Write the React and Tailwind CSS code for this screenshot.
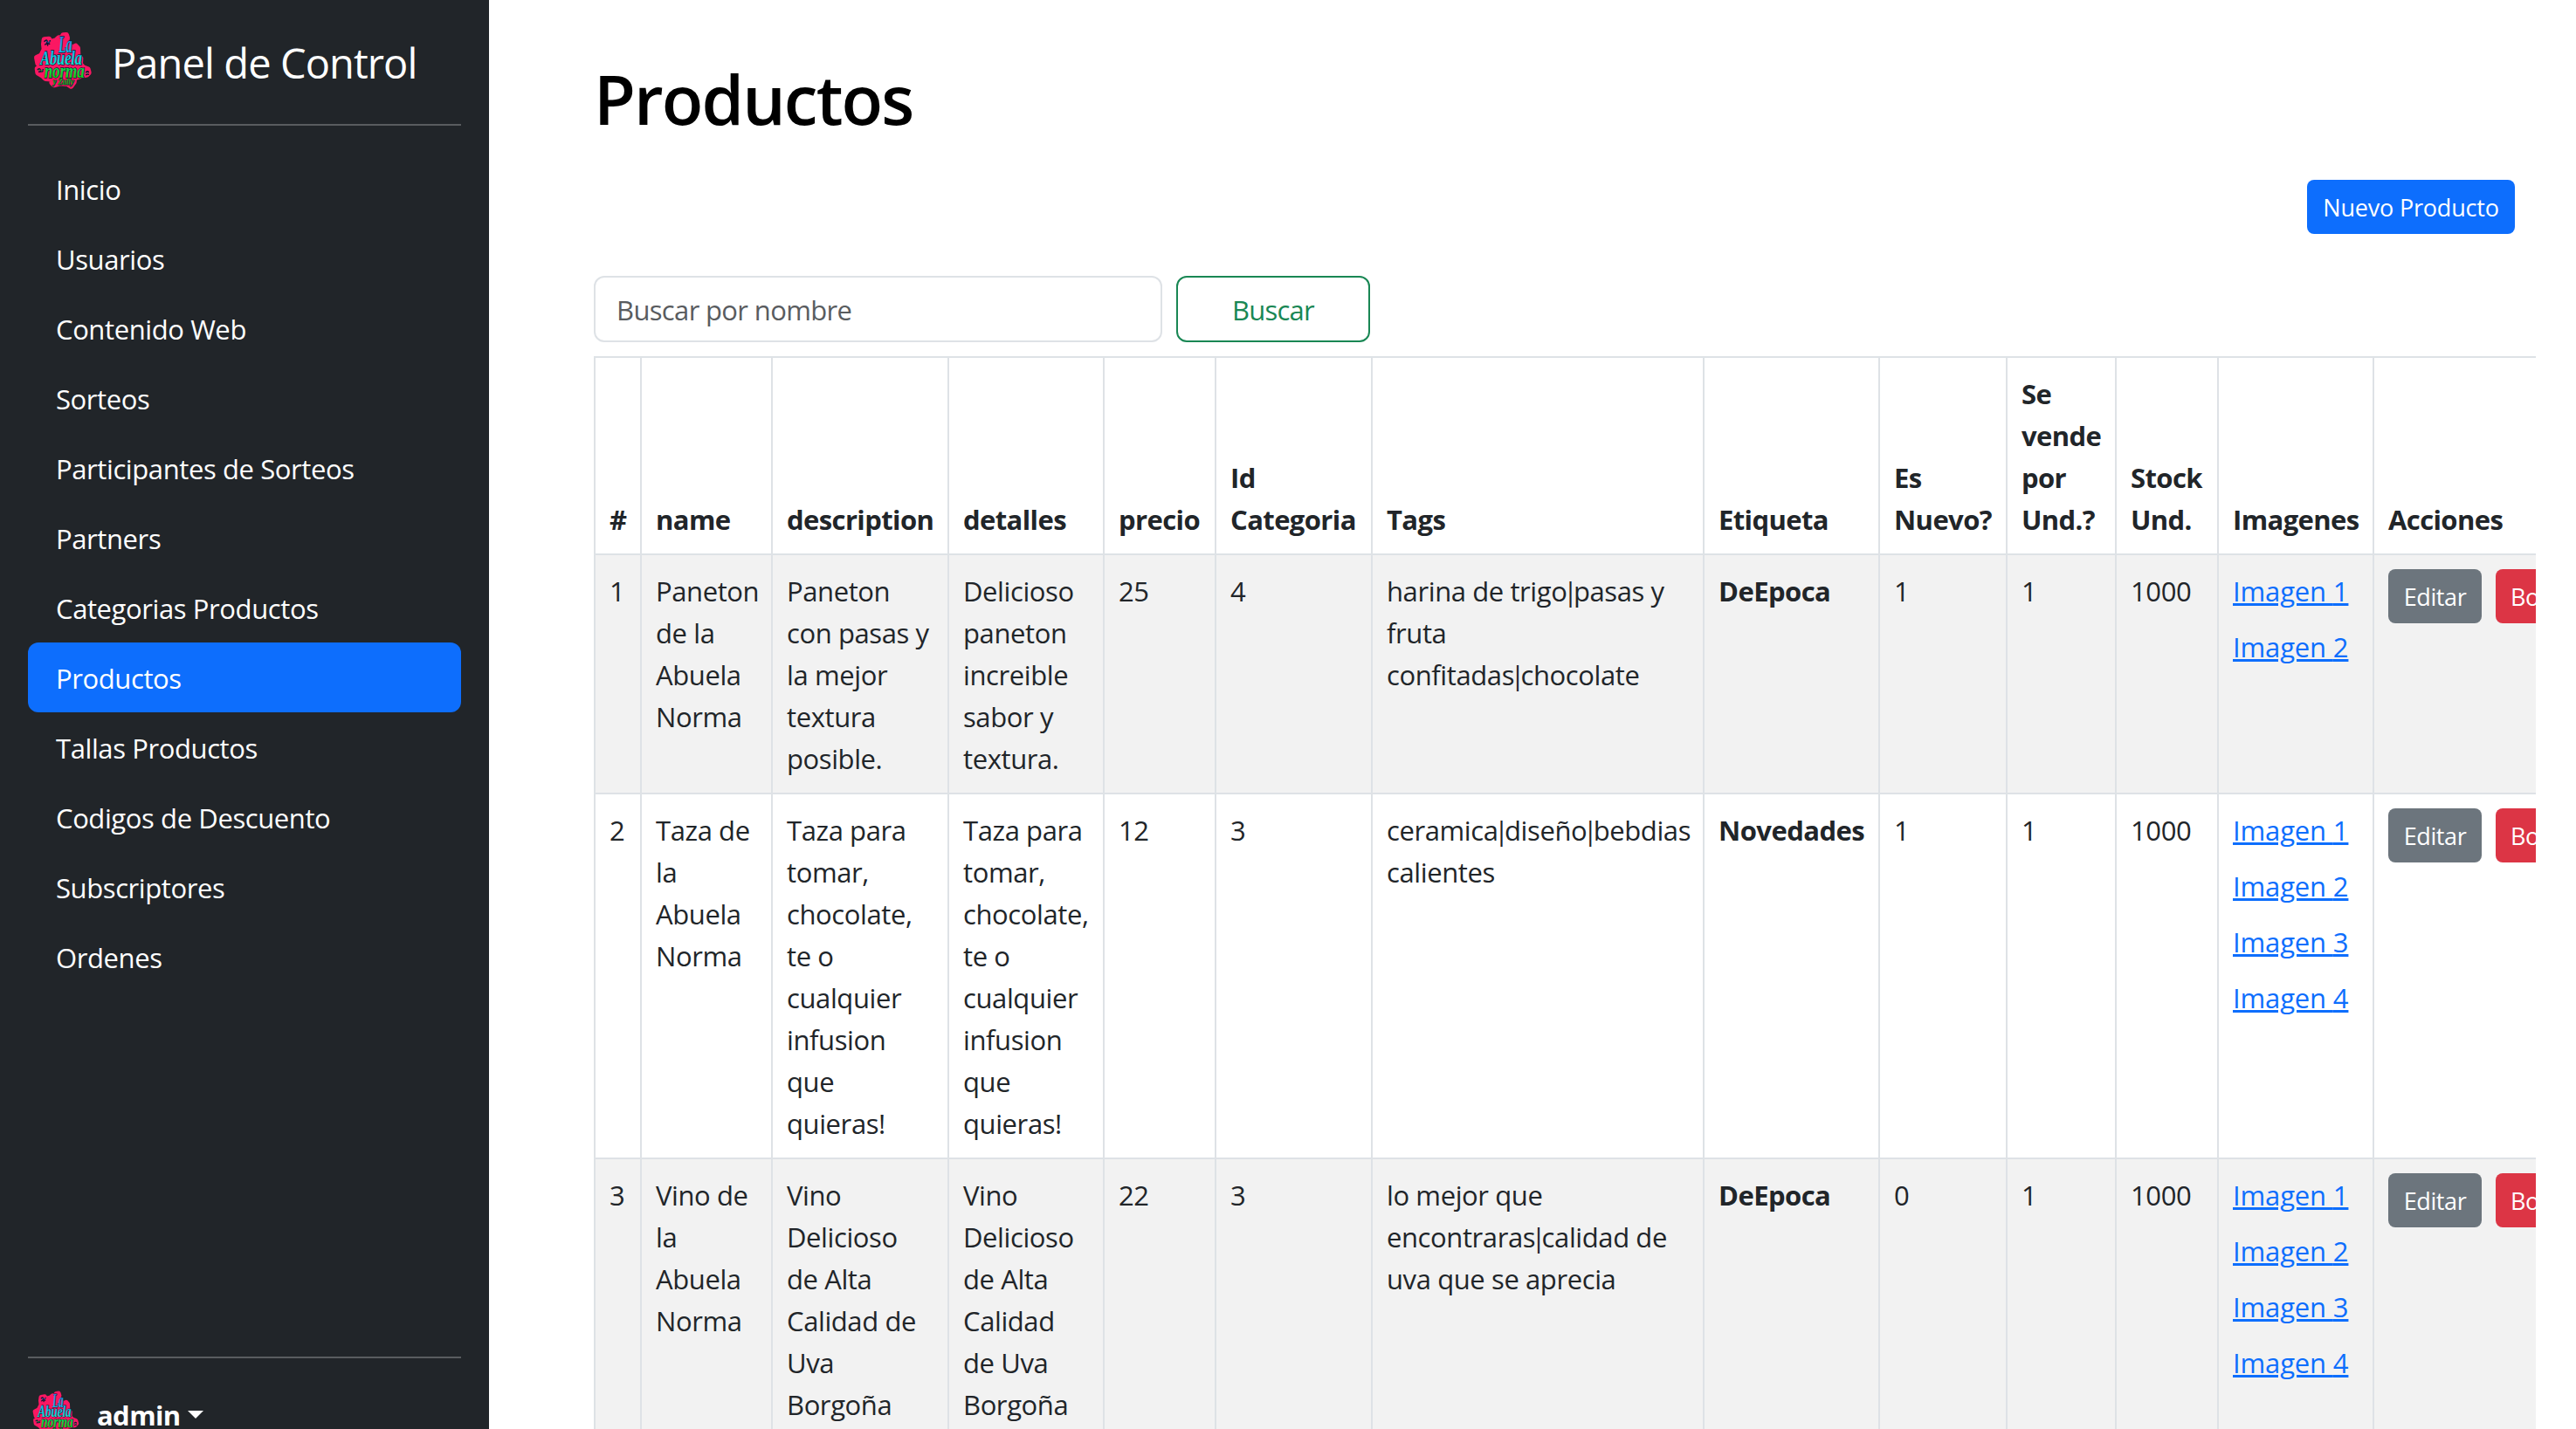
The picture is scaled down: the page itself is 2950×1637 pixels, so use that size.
const NAV = [
  'Inicio',
  'Usuarios',
  'Contenido Web',
  'Sorteos',
  'Participantes de Sorteos',
  'Partners',
  'Categorias Productos',
  'Productos',
  'Tallas Productos',
  'Codigos de Descuento',
  'Subscriptores',
  'Ordenes',
];

const COLUMNS = [
  { lines: ['#'], width: 'w-[53px]' },
  { lines: ['name'], width: 'w-[150px]' },
  { lines: ['description'], width: 'w-[202px]' },
  { lines: ['detalles'], width: 'w-[178px]' },
  { lines: ['precio'], width: 'w-[128px]' },
  { lines: ['Id', 'Categoria'], width: 'w-[179px]' },
  { lines: ['Tags'], width: 'w-[380px]' },
  { lines: ['Etiqueta'], width: 'w-[201px]' },
  { lines: ['Es', 'Nuevo?'], width: 'w-[146px]' },
  { lines: ['Se', 'vende', 'por', 'Und.?'], width: 'w-[125px]' },
  { lines: ['Stock', 'Und.'], width: 'w-[117px]' },
  { lines: ['Imagenes'], width: 'w-[178px]' },
  { lines: ['Acciones'], width: 'w-[262px]' },
];

const ROWS = [
  {
    id: '1',
    name: ['Paneton', 'de la', 'Abuela', 'Norma'],
    description: ['Paneton', 'con pasas y', 'la mejor', 'textura', 'posible.'],
    details: ['Delicioso', 'paneton', 'increible', 'sabor y', 'textura.'],
    price: '25',
    category: '4',
    tags: ['harina de trigo|pasas y', 'fruta', 'confitadas|chocolate'],
    label: 'DeEpoca',
    isNew: '1',
    images: 2,
  },
  {
    id: '2',
    name: ['Taza de', 'la', 'Abuela', 'Norma'],
    description: ['Taza para', 'tomar,', 'chocolate,', 'te o', 'cualquier', 'infusion', 'que', 'quieras!'],
    details: ['Taza para', 'tomar,', 'chocolate,', 'te o', 'cualquier', 'infusion', 'que', 'quieras!'],
    price: '12',
    category: '3',
    tags: ['ceramica|diseño|bebdias', 'calientes'],
    label: 'Novedades',
    isNew: '1',
    images: 4,
  },
  {
    id: '3',
    name: ['Vino de', 'la', 'Abuela', 'Norma'],
    description: ['Vino', 'Delicioso', 'de Alta', 'Calidad de', 'Uva', 'Borgoña'],
    details: ['Vino', 'Delicioso', 'de Alta', 'Calidad', 'de Uva', 'Borgoña'],
    price: '22',
    category: '3',
    tags: ['lo mejor que', 'encontraras|calidad de', 'uva que se aprecia'],
    label: 'DeEpoca',
    isNew: '0',
    images: 4,
  },
];

function Logo({ className, id }) {
  const lettering = {
    fontFamily: '"Liberation Serif", serif',
    fontStyle: 'italic',
    fontWeight: 700,
    stroke: '#0b1633',
    strokeWidth: 4,
    paintOrder: 'stroke',
  };
  return (
    <svg viewBox="0 0 240 240" className={className} aria-hidden="true">
      <defs>
        <linearGradient id={id} gradientUnits="userSpaceOnUse" x1="0" y1="30" x2="0" y2="134">
          <stop offset="0" stopColor="#2a80e0" />
          <stop offset="0.55" stopColor="#12b4e4" />
          <stop offset="1" stopColor="#14e6cf" />
        </linearGradient>
        <linearGradient id={id + '-g'} gradientUnits="userSpaceOnUse" x1="0" y1="135" x2="0" y2="212">
          <stop offset="0" stopColor="#14d860" />
          <stop offset="0.5" stopColor="#12d41c" />
          <stop offset="1" stopColor="#0a9a1c" />
        </linearGradient>
      </defs>
      <polygon
        fill="#fb1762"
        stroke="#fb1762"
        strokeWidth="18"
        strokeLinejoin="round"
        points="97,48 106,40 117,40 121,31 132,30 135,40 132,58 146,68 150,76 164,68 171,76 172,100 181,110 180,130 190,142 206,148 209,160 202,167 178,172 160,178 158,192 148,206 136,198 110,196 90,202 82,194 88,182 60,180 50,170 34,160 32,146 46,138 34,128 30,108 46,100 56,80 54,62 56,46 72,44 78,54"
      />
      <g stroke="#0b1633" strokeWidth="4.5" fill="none" strokeLinecap="round">
        <path d="M57 52q8-9 10 2t9-4M59 63q8-7 15-2M64 48l4 18" />
        <path d="M34 149q8-6 9 3t9-3M38 157l13-2" />
        <path d="M200 158q6-5 8 0M200 167q6-4 8-1" />
      </g>
      <g strokeWidth="2" fill="none" strokeLinecap="round">
        <path stroke="#2a80e0" d="M60 55q6-6 8 0t7-3" />
        <path stroke="#14c840" d="M37 151q5-4 7 2t6-2M201 162q4-3 6 0" />
      </g>
      <g {...lettering} fill={`url(#${id})`}>
        <text x="105" y="91" fontSize="84" textLength="47" lengthAdjust="spacingAndGlyphs">La</text>
        <text x="42" y="132" fontSize="70" textLength="144" lengthAdjust="spacingAndGlyphs">Abuela</text>
      </g>
      <g {...lettering} fill={`url(#${id}-g)`}>
        <text x="56" y="177" fontSize="70" textLength="138" lengthAdjust="spacingAndGlyphs">norma</text>
        <text x="86" y="202" fontSize="34" strokeWidth="3" textLength="72" lengthAdjust="spacingAndGlyphs">y Zully</text>
      </g>
    </svg>
  );
}

/* The vertical bar of the interface font is narrow, so it is pulled in on both sides. */
function Line({ text }) {
  const parts = text.split('|');
  return (
    <div className="whitespace-nowrap">
      {parts.map((part, i) => (
        <span key={i}>
          {i > 0 && <span className="-mx-[4.6px]">|</span>}
          {part}
        </span>
      ))}
    </div>
  );
}

function Cell({ lines, striped, bold }) {
  return (
    <td
      className={
        'border-r-2 border-b-2 border-[#dee2e6] px-4 pt-[17px] pb-[15px] align-top ' +
        (striped ? 'bg-[#f2f2f2] ' : 'bg-white ') +
        (bold ? 'font-bold tracking-[-0.55px]' : '')
      }
    >
      {lines.map((line, i) => (
        <Line key={i} text={line} />
      ))}
    </td>
  );
}

function Sidebar() {
  return (
    <aside className="flex h-[1684px] w-[560px] shrink-0 flex-col bg-[#212529] px-8 pt-[30px] text-white">
      <a className="flex h-20 items-center">
        <Logo className="size-20 shrink-0" id="brand" />
        <span className="pt-[3px] pl-4 text-[47px] leading-[72px] tracking-[-0.9px] whitespace-nowrap">
          Panel de Control
        </span>
      </a>
      <hr className="mt-8 border-t-2 border-[#595c5f]" />
      <nav className="mt-8 flex flex-col">
        {NAV.map((item) => (
          <a
            key={item}
            className={
              'h-20 rounded-xl px-8 pt-[17px] pb-[15px] ' + (item === 'Productos' ? 'bg-[#0d6efd]' : '')
            }
          >
            {item}
          </a>
        ))}
      </nav>
      <hr className="mt-auto border-t-2 border-[#595c5f]" />
      <div className="mt-8 flex h-24 items-start">
        <Logo className="size-16 shrink-0" id="account" />
        <strong className="ml-[15px] pt-[9px] tracking-[-0.6px]">admin</strong>
        <span className="mt-7 ml-2 border-x-[9.6px] border-t-[9.6px] border-x-transparent border-t-white" />
      </div>
    </aside>
  );
}

function ProductTable() {
  return (
    <div className="mt-4 w-[2224px] overflow-hidden">
      <table className="w-[2301px] table-fixed border-separate border-spacing-0 border-t-2 border-l-2 border-[#dee2e6] text-[#212529]">
        <colgroup>
          {COLUMNS.map((column, i) => (
            <col key={i} className={column.width} />
          ))}
        </colgroup>
        <thead>
          <tr>
            {COLUMNS.map((column, i) => (
              <th
                key={i}
                className="border-r-2 border-b-2 border-[#dee2e6] px-4 pt-[17px] pb-[15px] text-left align-bottom font-bold tracking-[-0.6px]"
              >
                {column.lines.map((line) => (
                  <Line key={line} text={line} />
                ))}
              </th>
            ))}
          </tr>
        </thead>
        <tbody>
          {ROWS.map((row, i) => {
            const striped = i % 2 === 0;
            const tone = striped ? 'bg-[#f2f2f2] ' : 'bg-white ';
            return (
              <tr key={row.id}>
                <Cell lines={[row.id]} striped={striped} />
                <Cell lines={row.name} striped={striped} />
                <Cell lines={row.description} striped={striped} />
                <Cell lines={row.details} striped={striped} />
                <Cell lines={[row.price]} striped={striped} />
                <Cell lines={[row.category]} striped={striped} />
                <Cell lines={row.tags} striped={striped} />
                <Cell lines={[row.label]} striped={striped} bold />
                <Cell lines={[row.isNew]} striped={striped} />
                <Cell lines={['1']} striped={striped} />
                <Cell lines={['1000']} striped={striped} />
                <td className={tone + 'border-r-2 border-b-2 border-[#dee2e6] px-4 pt-[17px] align-top'}>
                  <div className="flex flex-col items-start gap-4">
                    {Array.from({ length: row.images }, (_, n) => (
                      <a
                        key={n}
                        className="tracking-[-0.15px] whitespace-nowrap text-[#0d6efd] underline decoration-[3px] underline-offset-[2px]"
                      >
                        Imagen {n + 1}
                      </a>
                    ))}
                  </div>
                </td>
                <td className={tone + 'border-r-2 border-b-2 border-[#dee2e6] px-4 pt-4 align-top'}>
                  <div className="flex gap-4 text-[27px] leading-[42px] text-white">
                    <button className="h-[62px] w-[107px] shrink-0 rounded-lg bg-[#6c757d] pt-[2px]">Editar</button>
                    <button className="h-[62px] w-[112px] shrink-0 rounded-lg bg-[#dc3545] pt-[2px] pl-[17px] text-left">
                      Borrar
                    </button>
                  </div>
                </td>
              </tr>
            );
          })}
        </tbody>
      </table>
    </div>
  );
}

export default function App() {
  return (
    <div className="flex h-[1637px] w-[2950px] overflow-hidden bg-white font-['Open_Sans','Noto_Sans',sans-serif] text-[31px] leading-[48px] tracking-[-0.4px]">
      <Sidebar />
      <main className="min-w-0 flex-1 pt-[65px] pl-[120px]">
        <h1 className="text-[78px] leading-[96px] font-semibold tracking-[-1.9px] text-black">Productos</h1>
        <div className="mt-[45px] mr-[70px] flex justify-end">
          <button className="h-[62px] w-[238px] rounded-lg bg-[#0d6efd] pt-[2px] text-[27px] leading-[42px] tracking-[-0.2px] whitespace-nowrap text-white">
            Nuevo Producto
          </button>
        </div>
        <form className="mt-12 flex gap-4">
          <input
            type="text"
            placeholder="Buscar por nombre"
            className="h-[76px] w-[651px] rounded-xl border-2 border-[#dee2e6] px-6 pt-[2px] tracking-[-0.65px] placeholder:text-[#595c5f]"
          />
          <button
            type="button"
            className="h-[76px] w-[222px] rounded-xl border-2 border-[#198754] pt-[2px] tracking-[-0.8px] text-[#198754]"
          >
            Buscar
          </button>
        </form>
        <ProductTable />
      </main>
    </div>
  );
}
